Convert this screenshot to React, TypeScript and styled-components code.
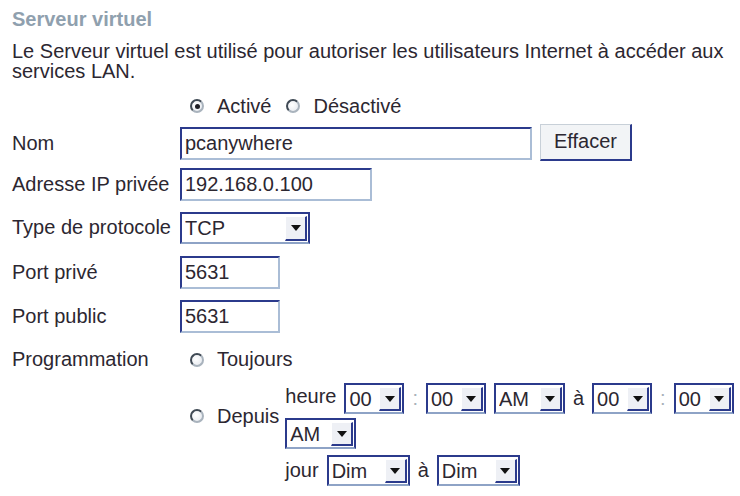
import React from "react";
import styled, { createGlobalStyle } from "styled-components";

const Global = createGlobalStyle`
  html, body { margin: 0; padding: 0; background: #ffffff; }
  body {
    font-family: "Liberation Sans", Arial, sans-serif;
    font-size: 20px;
    color: #2c2731;
  }
  * { box-sizing: border-box; }
`;

const NAVY = "#2b3a8c";
const LIGHT = "#aabdd6";

const Page = styled.div`
  width: 740px;
  padding: 8px 0 0 12px;
  overflow: hidden;
`;

const Title = styled.h1`
  margin: 0;
  font-size: 20px;
  line-height: 23px;
  font-weight: bold;
  color: #8fa0ae;
`;

const Intro = styled.p`
  margin: 10px 0 0;
  line-height: 20px;
  max-width: 728px;
`;

const Form = styled.div`
  margin-top: 8px;
  display: grid;
  grid-template-columns: 168px 1fr;
  grid-template-rows: 34px 41px 41px 45px 45px 43px 43px auto;
  align-items: center;
  line-height: 23px;
`;

const Label = styled.div`
  white-space: nowrap;
`;

const Field = styled.div`
  display: flex;
  align-items: center;
  gap: 8px;
`;

const RadioGroup = styled.div`
  display: flex;
  align-items: center;
  gap: 15px;
`;

const Choice = styled.label`
  display: flex;
  align-items: center;
  gap: 13px;
  padding-left: 10px;
  white-space: nowrap;
`;

const InlineChoice = styled(Choice)`
  padding-left: 0;
  &:first-child { padding-left: 10px; }
`;

const Radio = styled.span<{ $checked?: boolean }>`
  position: relative;
  flex: none;
  width: 14px;
  height: 14px;
  border-radius: 50%;
  border: 2px solid;
  border-color: #3f4954 #a9b3bd #a9b3bd #3f4954;
  background: radial-gradient(circle at 40% 40%, #ffffff 0%, #e2e6ec 100%);
  &::after {
    content: "";
    display: ${(p) => (p.$checked ? "block" : "none")};
    position: absolute;
    left: 50%;
    top: 50%;
    width: 5px;
    height: 5px;
    margin: -2.5px 0 0 -2.5px;
    border-radius: 50%;
    background: #1d1d24;
  }
`;

const TextInput = styled.input<{ $w: number }>`
  width: ${(p) => p.$w}px;
  height: 33px;
  padding: 0 3px;
  margin: 0;
  font-family: inherit;
  font-size: 20px;
  color: #2c2731;
  background: #ffffff;
  border-style: solid;
  border-width: 2px;
  border-color: ${NAVY} ${LIGHT} ${LIGHT} ${NAVY};
  outline: none;
`;

const Button = styled.button`
  width: 92px;
  height: 37px;
  padding: 0;
  margin-top: -3px;
  font-family: inherit;
  font-size: 20px;
  color: #2c2731;
  background: #f2f4f6;
  border-style: solid;
  border-width: 1px 2px 2px 1px;
  border-color: #c8d0d8 ${NAVY} ${NAVY} #c8d0d8;
`;

const SelectBox = styled.div<{ $w: number; $h?: number }>`
  display: flex;
  align-items: stretch;
  width: ${(p) => p.$w}px;
  height: ${(p) => p.$h ?? 31}px;
  padding: 2px 1px 1px 3px;
  background: #ffffff;
  border-style: solid;
  border-width: 2px;
  border-color: ${NAVY} ${NAVY} #8ea3c6 ${NAVY};
  flex: none;
`;

const SelectValue = styled.span`
  flex: 1;
  display: flex;
  align-items: center;
  white-space: nowrap;
  overflow: hidden;
`;

const ArrowButton = styled.span`
  flex: none;
  width: 22px;
  display: flex;
  align-items: center;
  justify-content: center;
  background: #eef0f5;
  border-style: solid;
  border-width: 1px 2px 2px 1px;
  border-color: #ffffff ${NAVY} ${NAVY} #ffffff;
`;

const Schedule = styled.div`
  display: grid;
  grid-template-columns: auto 1fr;
  column-gap: 6px;
  row-gap: 6px;
  align-items: center;
  padding-top: 2px;
`;

const TimeLine = styled.div`
  display: flex;
  flex-wrap: wrap;
  align-items: center;
  column-gap: 8px;
  row-gap: 4px;
`;

const DayLine = styled.div`
  grid-column: 2;
  display: flex;
  align-items: center;
  gap: 8px;
`;

const Colon = styled.span`
  color: #a9b1b9;
`;

const Word = styled.span<{ $raised?: boolean }>`
  white-space: nowrap;
  position: relative;
  top: ${(p) => (p.$raised ? "-2px" : "0")};
`;

const Arrow = () => (
  <svg width="10" height="6" viewBox="0 0 10 6">
    <path d="M0 0 H10 L5 6 Z" fill="#111" />
  </svg>
);

const Select = ({ value, w, h }: { value: string; w: number; h?: number }) => (
  <SelectBox $w={w} $h={h}>
    <SelectValue>{value}</SelectValue>
    <ArrowButton>
      <Arrow />
    </ArrowButton>
  </SelectBox>
);

export default function App() {
  return (
    <>
      <Global />
      <Page>
        <Title>Serveur virtuel</Title>
        <Intro>
          Le Serveur virtuel est utilisé pour autoriser les utilisateurs Internet à accéder aux
          services LAN.
        </Intro>
        <Form>
          <Label />
          <RadioGroup>
            <InlineChoice>
              <Radio $checked />
              Activé
            </InlineChoice>
            <InlineChoice>
              <Radio />
              Désactivé
            </InlineChoice>
          </RadioGroup>

          <Label>Nom</Label>
          <Field>
            <TextInput $w={352} defaultValue="pcanywhere" readOnly />
            <Button>Effacer</Button>
          </Field>

          <Label>Adresse IP privée</Label>
          <Field>
            <TextInput $w={192} defaultValue="192.168.0.100" readOnly />
          </Field>

          <Label>Type de protocole</Label>
          <Field>
            <Select value="TCP" w={130} h={32} />
          </Field>

          <Label>Port privé</Label>
          <Field>
            <TextInput $w={100} defaultValue="5631" readOnly />
          </Field>

          <Label>Port public</Label>
          <Field>
            <TextInput $w={100} defaultValue="5631" readOnly />
          </Field>

          <Label>Programmation</Label>
          <Field>
            <Choice>
              <Radio />
              Toujours
            </Choice>
          </Field>

          <Label />
          <Schedule>
            <Choice>
              <Radio />
              Depuis
            </Choice>
            <TimeLine>
              <Word $raised>heure</Word>
              <Select value="00" w={60} />
              <Colon>:</Colon>
              <Select value="00" w={60} />
              <Select value="AM" w={71} />
              <Word>à</Word>
              <Select value="00" w={60} />
              <Colon>:</Colon>
              <Select value="00" w={60} />
              <Select value="AM" w={71} />
            </TimeLine>
            <DayLine>
              <Word>jour</Word>
              <Select value="Dim" w={83} />
              <Word>à</Word>
              <Select value="Dim" w={83} />
            </DayLine>
          </Schedule>
        </Form>
      </Page>
    </>
  );
}
